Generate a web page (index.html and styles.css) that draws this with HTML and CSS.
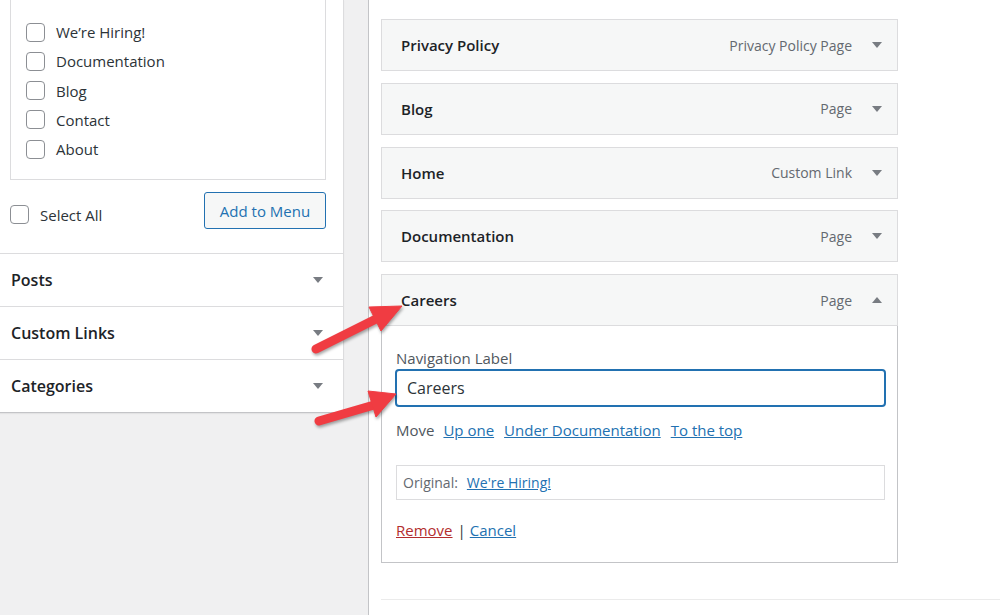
FILE: index.html
```html
<!DOCTYPE html>
<html lang="en">
<head>
<meta charset="utf-8">
<title>Menus</title>
<link rel="stylesheet" href="styles.css">
</head>
<body>
<div class="page">
  <div class="left">
    <div class="panel">
      <div class="list-box">
        <label class="check-row"><span class="cb"></span><span>We’re Hiring!</span></label>
        <label class="check-row"><span class="cb"></span><span>Documentation</span></label>
        <label class="check-row"><span class="cb"></span><span>Blog</span></label>
        <label class="check-row"><span class="cb"></span><span>Contact</span></label>
        <label class="check-row"><span class="cb"></span><span>About</span></label>
      </div>
      <div class="actions">
        <label class="select-all"><span class="cb"></span><span>Select All</span></label>
        <button class="add-btn" type="button">Add to Menu</button>
      </div>
      <div class="section"><span>Posts</span><span class="tri-down"></span></div>
      <div class="section"><span>Custom Links</span><span class="tri-down"></span></div>
      <div class="section"><span>Categories</span><span class="tri-down"></span></div>
    </div>
  </div>

  <div class="right">
    <div class="item"><span class="item-title">Privacy Policy</span><span class="item-type">Privacy Policy Page</span><span class="tri-down"></span></div>
    <div class="item"><span class="item-title">Blog</span><span class="item-type">Page</span><span class="tri-down"></span></div>
    <div class="item"><span class="item-title">Home</span><span class="item-type">Custom Link</span><span class="tri-down"></span></div>
    <div class="item"><span class="item-title">Documentation</span><span class="item-type">Page</span><span class="tri-down"></span></div>
    <div class="item item-open"><span class="item-title">Careers</span><span class="item-type">Page</span><span class="tri-up"></span></div>
    <div class="item-body">
      <div class="field-label">Navigation Label</div>
      <div class="nav-input">Careers</div>
      <div class="move-row">
        <span class="move-label">Move</span>
        <a href="#" class="link">Up one</a>
        <a href="#" class="link">Under Documentation</a>
        <a href="#" class="link">To the top</a>
      </div>
      <div class="original">
        <span class="orig-label">Original:</span>
        <a href="#" class="link">We're Hiring!</a>
      </div>
      <div class="remove-row">
        <a href="#" class="remove">Remove</a><span class="sep">|</span><a href="#" class="link">Cancel</a>
      </div>
    </div>
    <div class="footer-line"></div>
  </div>

  <svg class="annot" width="1000" height="615" viewBox="0 0 1000 615">
    <g class="arrow">
      <line x1="316" y1="349" x2="378" y2="318" />
      <polygon points="402,306 369,307 381,331" />
    </g>
    <g class="arrow">
      <line x1="319" y1="421" x2="374" y2="405" />
      <polygon points="396,394 368,391 376,417" />
    </g>
  </svg>
</div>
</body>
</html>
```

FILE: styles.css
```css
html, body {
  margin: 0;
  padding: 0;
}

body {
  background: #f0f0f1;
  font-family: "Open Sans", "Noto Sans", sans-serif;
  color: #2c3338;
  width: 1000px;
  height: 615px;
  overflow: hidden;
}

.page {
  position: relative;
  display: flex;
  align-items: flex-start;
  height: 615px;
}

/* ---------- left column ---------- */
.left {
  width: 344px;
  flex: none;
}

.panel {
  background: #fff;
  border-right: 1px solid #dcdcde;
  border-bottom: 1px solid #c3c4c7;
  box-shadow: 0 1px 1px rgba(0, 0, 0, 0.05);
}

.list-box {
  margin: 0 17px 0 10px;
  border: 1px solid #dcdcde;
  border-top: none;
  padding: 17.5px 0 15px 15px;
}

.check-row {
  display: flex;
  align-items: center;
  height: 29.25px;
  font-size: 15px;
  color: #2c3338;
}

.cb {
  box-sizing: border-box;
  width: 19px;
  height: 19px;
  border: 1px solid #8c8f94;
  border-radius: 4px;
  background: #fff;
  margin-right: 11px;
  flex: none;
}

.actions {
  display: flex;
  justify-content: space-between;
  margin: 0 17px 0 10px;
  padding: 12px 0 24px;
}

.select-all {
  display: flex;
  align-items: center;
  align-self: flex-end;
  margin-bottom: 4px;
  font-size: 15px;
  color: #2c3338;
}

.add-btn {
  box-sizing: border-box;
  width: 122px;
  height: 37px;
  border: 1px solid #2271b1;
  border-radius: 3px;
  background: #f6f7f7;
  color: #2271b1;
  font-family: inherit;
  font-size: 15px;
  padding: 2px 0 0;
}

.section {
  box-sizing: border-box;
  height: 53px;
  border-top: 1px solid #dcdcde;
  display: flex;
  align-items: center;
  justify-content: space-between;
  padding: 0 20px 0 11px;
  font-size: 16px;
  font-weight: 600;
  color: #1d2327;
}

.tri-down {
  width: 0;
  height: 0;
  border-left: 5px solid transparent;
  border-right: 5px solid transparent;
  border-top: 6px solid #787c82;
  flex: none;
}

.tri-up {
  width: 0;
  height: 0;
  border-left: 5px solid transparent;
  border-right: 5px solid transparent;
  border-bottom: 6px solid #787c82;
  flex: none;
}

/* ---------- right column ---------- */
.right {
  flex: 1;
  align-self: stretch;
  margin-left: 24px;
  background: #fff;
  border-left: 1px solid #c3c4c7;
  padding: 19px 0 0 12px;
}

.item {
  box-sizing: border-box;
  width: 517px;
  height: 52px;
  border: 1px solid #dcdcde;
  background: #f6f7f7;
  display: flex;
  align-items: center;
  padding: 0 15px 0 19px;
  margin-bottom: 11.75px;
}

.item-open {
  margin-bottom: 0;
}

.item-title {
  flex: 1;
  font-size: 15px;
  font-weight: 600;
  color: #1d2327;
}

.item-type {
  font-size: 14px;
  color: #646970;
  margin-right: 20px;
}

.item-body {
  box-sizing: border-box;
  width: 517px;
  border: 1px solid #c3c4c7;
  border-top: none;
  background: #fff;
  padding: 22px 12px 22px 14px;
}

.field-label {
  font-size: 15px;
  line-height: 20px;
  color: #50575e;
}

.nav-input {
  box-sizing: border-box;
  width: 491px;
  height: 38px;
  margin: 1px 0 0 -1px;
  border: 2px solid #2271b1;
  border-radius: 4px;
  padding: 0 10px;
  display: flex;
  align-items: center;
  font-size: 16px;
  color: #2c3338;
}

.move-row {
  display: flex;
  align-items: center;
  gap: 10px;
  margin-top: 13px;
  height: 20px;
  font-size: 15px;
}

.move-label {
  color: #50575e;
  margin-right: -1px;
}

.link {
  color: #2271b1;
  text-decoration: underline;
}

.original {
  box-sizing: border-box;
  height: 35px;
  margin-top: 25px;
  border: 1px solid #dcdcde;
  display: flex;
  align-items: center;
  gap: 9px;
  padding: 0 6px;
  font-size: 14px;
}

.orig-label {
  color: #646970;
}

.remove-row {
  display: flex;
  align-items: center;
  height: 20px;
  margin-top: 20px;
  font-size: 15px;
}

.remove {
  color: #b32d2e;
  text-decoration: underline;
}

.sep {
  color: #2c3338;
  margin: 0 4px 0 5px;
}

.footer-line {
  margin-top: 36px;
  border-top: 1px solid #ebebeb;
}

/* ---------- annotations ---------- */
.annot {
  position: absolute;
  left: 0;
  top: 0;
  pointer-events: none;
}

.arrow {
  fill: #f03c42;
  stroke: #f03c42;
  filter: drop-shadow(1px 2px 1.5px rgba(0, 0, 0, 0.35));
}

.arrow line {
  stroke-width: 9;
  stroke-linecap: round;
}

.arrow polygon {
  stroke-width: 1;
  stroke-linejoin: round;
}
```
